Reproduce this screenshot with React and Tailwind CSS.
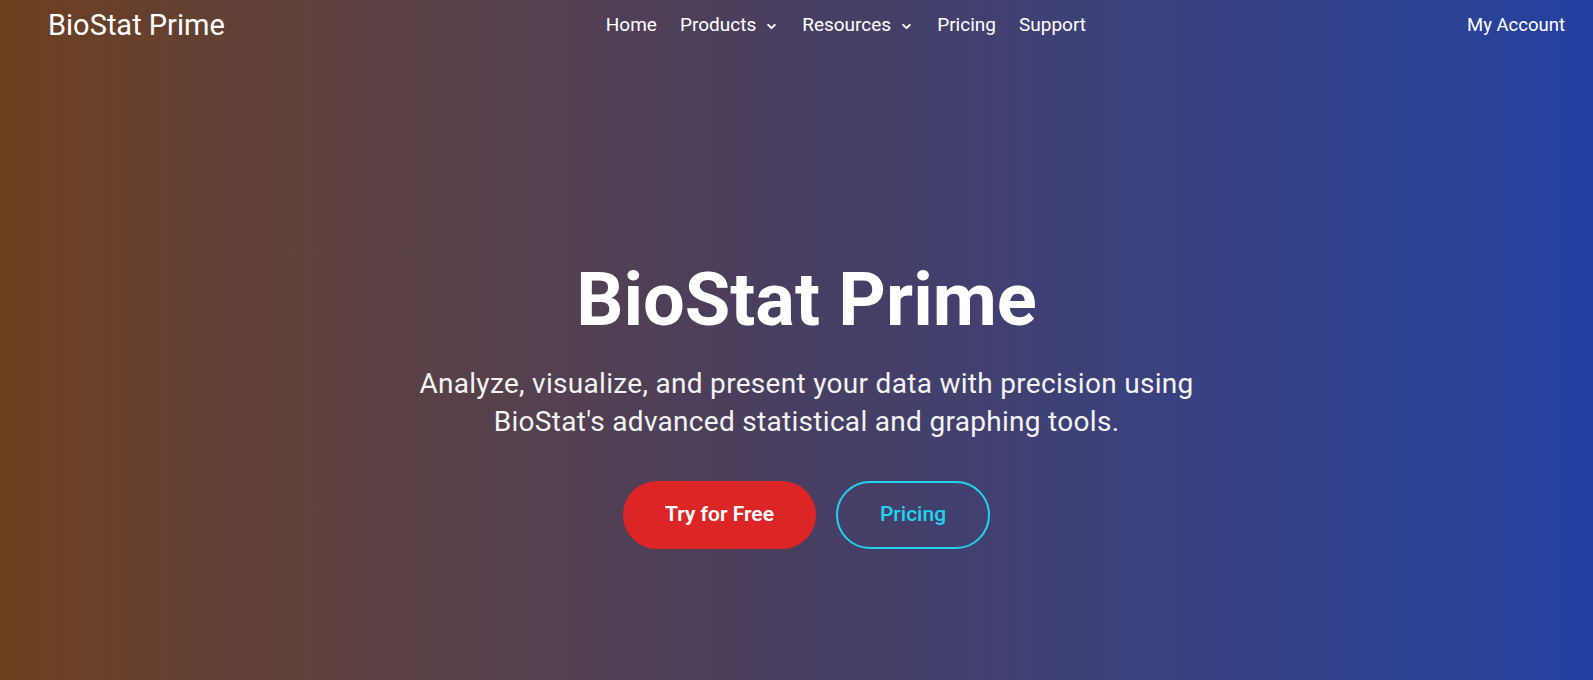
import React from 'react';

const NavLink = ({ children, caret }) => (
    <a href="#" className="flex items-center gap-[10px] text-white">
        <span>{children}</span>
        {caret && (
            <svg width="11" height="11" viewBox="0 0 10 10" className="mt-[1px] mr-[2px]">
                <path d="M2 3.5 L5 6.5 L8 3.5" fill="none" stroke="white" strokeWidth="1.8" strokeLinecap="round" strokeLinejoin="round" />
            </svg>
        )}
    </a>
);

export default function App() {
    return (
        <div
            className="w-full h-[680px] bg-gradient-to-r from-[#6d3f1d] via-[#483e61] to-[#2341a1] text-white"
            style={{ fontFamily: 'Roboto, "Noto Sans", sans-serif' }}
        >
            <header className="h-[51px] flex items-center justify-between pl-12 pr-7">
                <a href="#" className="text-[29px] leading-none text-white">BioStat Prime</a>
                <nav className="flex items-center gap-[23px] text-[19px]">
                    <NavLink>Home</NavLink>
                    <NavLink caret>Products</NavLink>
                    <NavLink caret>Resources</NavLink>
                    <NavLink>Pricing</NavLink>
                    <NavLink>Support</NavLink>
                </nav>
                <a href="#" className="text-[18.5px] text-white">My Account</a>
            </header>

            <section className="flex flex-col items-center text-center pt-[212px] pl-5">
                <h1 className="text-[74px] font-bold leading-none">BioStat Prime</h1>
                <p className="mt-[28px] max-w-[820px] text-[28px] leading-[38px] tracking-[0.3px] text-[#f3f3f3]">
                    Analyze, visualize, and present your data with precision using BioStat's advanced statistical and graphing tools.
                </p>
                <div className="mt-[40px] flex items-center gap-5">
                    <button className="h-[68px] w-[193px] rounded-full bg-[#dc2626] text-[21px] font-semibold text-white">
                        Try for Free
                    </button>
                    <button className="h-[68px] w-[154px] rounded-full border-2 border-[#22d3ee] text-[21px] font-medium text-[#22d3ee]">
                        Pricing
                    </button>
                </div>
            </section>
        </div>
    );
}
